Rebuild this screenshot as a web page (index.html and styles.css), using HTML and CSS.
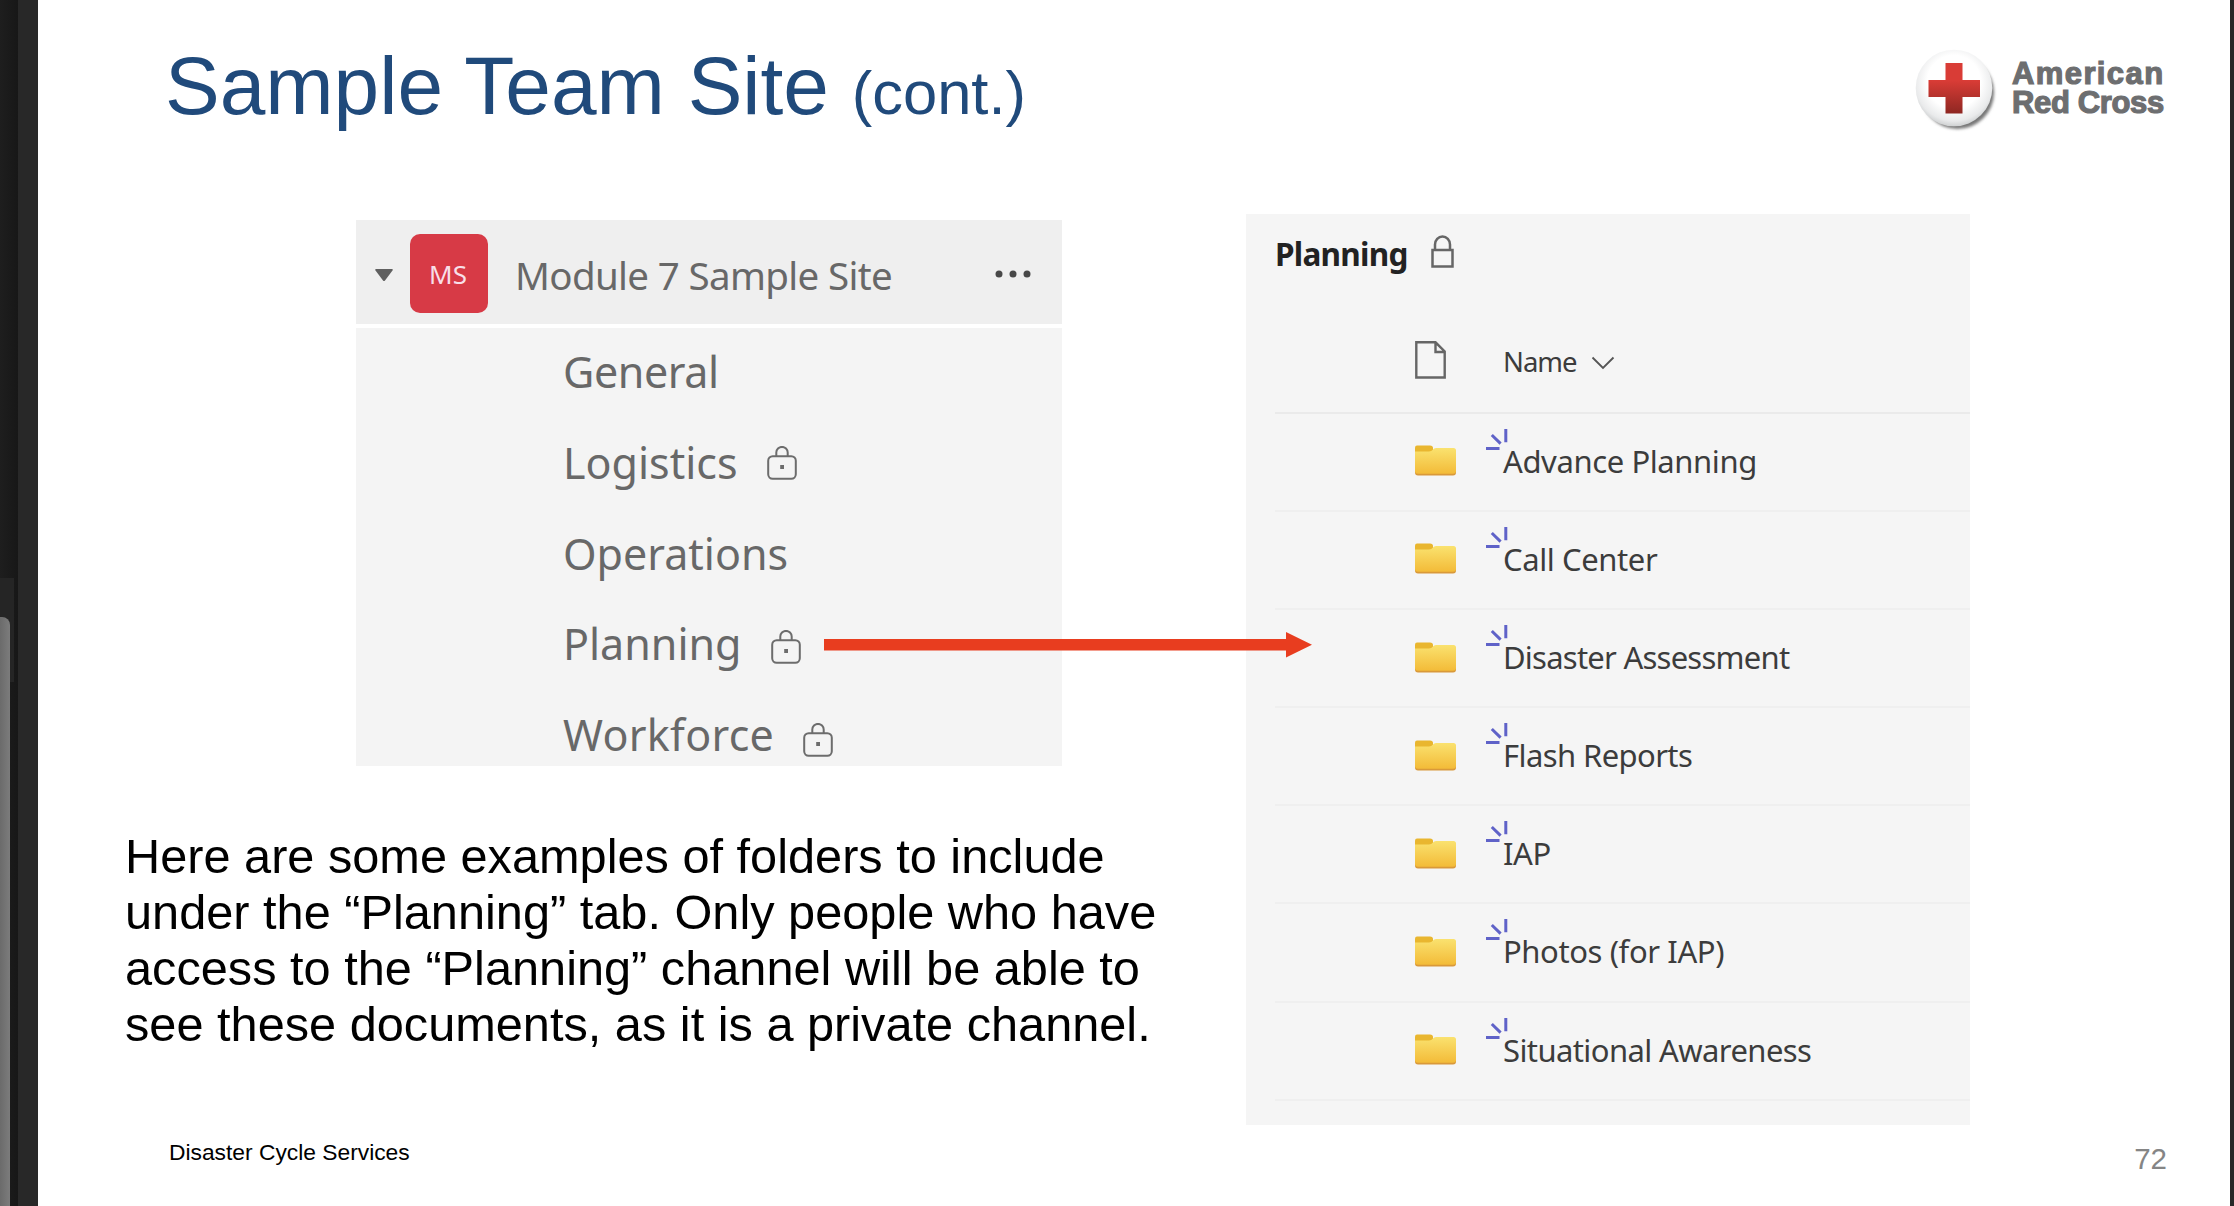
FILE: index.html
```html
<!DOCTYPE html>
<html lang="en">
<head>
<meta charset="utf-8">
<title>Sample Team Site</title>
<link rel="stylesheet" href="styles.css">
</head>
<body>
<svg class="defs" width="0" height="0" aria-hidden="true">
  <defs>
    <linearGradient id="folderFill" x1="0" y1="0" x2="0" y2="1"><stop offset="0" stop-color="#fae26f"/><stop offset="1" stop-color="#f3bb38"/></linearGradient>
    <linearGradient id="crossFill" x1="0" y1="0" x2="0" y2="1"><stop offset="0.35" stop-color="#d93c36"/><stop offset="1" stop-color="#8e2722"/></linearGradient>
    <radialGradient id="buttonFill" cx="0.5" cy="0.42" r="0.58"><stop offset="0.6" stop-color="#ffffff"/><stop offset="0.88" stop-color="#e9eaeb"/><stop offset="1" stop-color="#cfd1d2"/></radialGradient>
    <filter id="soft" x="-20%" y="-20%" width="140%" height="140%"><feGaussianBlur stdDeviation="1.8"/></filter>
  </defs>
  <symbol id="channel-lock" viewBox="0 0 30 34">
    <rect x="1.2" y="10.2" width="27.6" height="22.6" rx="4.5"/>
    <path d="M9.3 10V6.6a5.7 5.7 0 0 1 11.4 0V10"/>
    <rect class="fill" x="13.2" y="19" width="3.8" height="4"/>
  </symbol>
  <symbol id="folder" viewBox="0 0 41 31">
    <path fill="#e9b62f" d="M0 2.5Q0 0.5 2 0.5H15Q18 0.5 18 3V9H0Z"/>
    <path fill="#d9993a" d="M0 10H41V27.5Q41 30.5 38 30.5H3Q0 30.5 0 27.5Z"/>
    <path fill="url(#folderFill)" d="M0 6.6H14Q16.500 6.300 18 4.500Q19 3 21 3H38.500Q41 3 41 5.500V26Q41 28.800 38 28.800H3Q0 28.800 0 26Z"/>
  </symbol>
  <symbol id="spark" viewBox="0 0 24 24">
    <path d="M1 20.500H14.500M6.800 7L15.600 15.600M20.800 1V14.200"/>
  </symbol>
</svg>

<div class="viewer">
  <aside class="gutter">
    <div class="track"><div class="thumb"></div></div>
  </aside>

  <main class="slide">
    <header class="slide-head">
      <h1>Sample Team Site <small>(cont.)</small></h1>
      <div class="brand">
        <svg class="brand-mark" width="84" height="88" viewBox="0 0 84 88">
          <circle cx="43.500" cy="44.500" r="36.500" fill="#777" filter="url(#soft)"/>
          <circle cx="40" cy="40" r="38.300" fill="url(#buttonFill)"/>
          <path fill="url(#crossFill)" d="M31.500 15H48.500V32H66V49H48.500V65.500H31.500V49H14.500V32H31.500Z"/>
        </svg>
        <div class="brand-name"><span class="brand-top">American</span><span>Red Cross</span></div>
      </div>
    </header>

    <div class="content">
      <section class="left">
        <div class="team">
          <div class="team-head">
            <svg class="caret" width="20" height="14" viewBox="0 0 20 14"><path d="M2 1H18Q19.500 1 18.500 2.500L11 12.500Q10 13.500 9 12.500L1.500 2.500Q0.500 1 2 1Z" fill="#606060"/></svg>
            <div class="avatar">MS</div>
            <div class="team-name">Module 7 Sample Site</div>
            <svg class="more" width="36" height="8" viewBox="0 0 36 8" fill="#484848"><circle cx="4" cy="4" r="3.500"/><circle cx="18" cy="4" r="3.500"/><circle cx="32" cy="4" r="3.500"/></svg>
          </div>
          <ul class="channels">
            <li class="snug">General</li>
            <li>Logistics<svg class="lock"><use href="#channel-lock"/></svg></li>
            <li>Operations</li>
            <li>Planning<svg class="lock low"><use href="#channel-lock"/></svg></li>
            <li class="loose">Workforce<svg class="lock lower"><use href="#channel-lock"/></svg></li>
          </ul>
          <svg class="arrow" width="488" height="26" viewBox="0 0 488 26"><path fill="#e83d1f" d="M0 7H462V0L488 12.800L462 25.600V18.600H0Z"/></svg>
        </div>
        <p class="note">Here are some examples of folders to include<br>under the “Planning” tab. Only people who have<br>access to the “Planning” channel will be able to<br>see these documents, as it is a private channel.</p>
      </section>

      <section class="files">
        <div class="files-head">
          <h2>Planning</h2>
          <svg class="files-lock" width="23" height="33" viewBox="0 0 23 33"><path d="M1.500 15H21.500V31.500H1.500ZM4 15V9.500a7.500 8 0 0 1 15 0V15"/></svg>
        </div>
        <div class="row cols">
          <svg class="doc" width="31" height="38" viewBox="0 0 31 38"><path d="M1.300 1.300H20.500L29.700 10.500V36.500H1.300ZM20.500 1.300V11H29.700"/></svg>
          <div class="name">Name<svg class="chevron" width="24" height="14" viewBox="0 0 24 14"><path d="M1.500 1.500L12 12L22.500 1.500"/></svg></div>
        </div>
        <div class="row"><svg class="folder"><use href="#folder"/></svg><div class="name"><svg class="spark"><use href="#spark"/></svg>Advance Planning</div></div>
        <div class="row"><svg class="folder"><use href="#folder"/></svg><div class="name"><svg class="spark"><use href="#spark"/></svg>Call Center</div></div>
        <div class="row"><svg class="folder"><use href="#folder"/></svg><div class="name tighter"><svg class="spark"><use href="#spark"/></svg>Disaster Assessment</div></div>
        <div class="row"><svg class="folder"><use href="#folder"/></svg><div class="name tight"><svg class="spark"><use href="#spark"/></svg>Flash Reports</div></div>
        <div class="row"><svg class="folder"><use href="#folder"/></svg><div class="name"><svg class="spark"><use href="#spark"/></svg>IAP</div></div>
        <div class="row"><svg class="folder"><use href="#folder"/></svg><div class="name"><svg class="spark"><use href="#spark"/></svg>Photos (for IAP)</div></div>
        <div class="row"><svg class="folder"><use href="#folder"/></svg><div class="name tight"><svg class="spark"><use href="#spark"/></svg>Situational Awareness</div></div>
      </section>
    </div>

    <footer class="slide-foot">
      <span>Disaster Cycle Services</span>
      <span class="page">72</span>
    </footer>
  </main>
</div>
</body>
</html>
```
FILE: styles.css
```css
* { box-sizing: border-box; }
body { margin: 0; background: #282828; font-family: "Liberation Sans", Arial, sans-serif; color: #000; }
.defs { display: block; height: 0; }
.viewer { display: flex; width: 2234px; height: 1206px; overflow: hidden; background: #282828; }

.gutter { width: 38px; padding-top: 578px; background: linear-gradient(90deg, #1e1e1e 0, #171717 18px, #282828 18px); }
.track { width: 14px; height: 104px; padding-top: 39px; background: #252525; }
.thumb { width: 10px; height: 600px; border-radius: 0 8px 0 0; background: linear-gradient(90deg, #6b6b6b, #7c7c7c); }

.slide { display: flex; flex-direction: column; width: 2192px; background: #fff; }
.slide-head { display: flex; justify-content: space-between; height: 214px; padding: 36px 63px 0 127px; }
h1 { margin: 0; font-size: 82px; font-weight: 400; line-height: 100px; color: #204a7b; white-space: nowrap; }
h1 small { font-size: 61.500px; line-height: 1; }
.brand { display: flex; gap: 14px; padding-top: 12px; }
.brand-name { display: flex; flex-direction: column; width: 155px; padding-top: 11px; font-size: 31px; font-weight: 700; line-height: 29px; letter-spacing: -0.350px; color: #6d6e70; white-space: nowrap; -webkit-text-stroke: 1.200px #6d6e70; }
.brand-top { letter-spacing: 1.400px; }

.content { display: flex; height: 911px; }
.left { width: 1208px; padding: 6px 0 0 87px; }
.team { position: relative; width: 706px; height: 546px; margin-left: 231px; color: #686868; font-family: "Noto Sans", sans-serif; }
.team-head { display: flex; align-items: center; height: 104px; padding: 3px 31px 0 18px; background: #efefef; }
.caret { margin-top: 2px; }
.avatar { display: flex; align-items: center; justify-content: center; width: 78px; height: 79px; margin-left: 16px; padding-right: 2px; border-radius: 10px; background: #d73a46; color: #f8dfe8; font-size: 26px; }
.team-name { flex: 1; padding: 3px 0 0 27px; font-size: 38.500px; line-height: 60px; letter-spacing: -0.650px; white-space: nowrap; }
.channels { height: 438px; margin: 4px 0 0; padding: 0 0 0 207px; overflow: hidden; background: #f4f4f4; list-style: none; font-size: 43px; }
.channels li { display: flex; align-items: center; gap: 29px; height: 90.750px; line-height: 90.750px; }
.channels .snug { margin-top: -1px; letter-spacing: -0.400px; }
.channels .loose { letter-spacing: 0.300px; }
.lock { width: 30px; height: 34px; fill: none; stroke: #6c6c6c; stroke-width: 2; }
#channel-lock .fill { fill: #6c6c6c; stroke: none; }
.lock.low { margin-top: 4px; }
.lock.lower { margin-top: 10px; }
.arrow { position: absolute; left: 468px; top: 412px; }
.note { margin: 62px 0 0; font-size: 48.700px; line-height: 56px; white-space: nowrap; }

.files { width: 724px; padding-left: 29px; background: #f5f5f5; color: #3c3c3c; font-family: "Noto Sans", sans-serif; }
.files-head { display: flex; align-items: center; gap: 23px; height: 79px; margin-bottom: 18px; }
h2 { margin: 0; font-size: 31.500px; line-height: 60px; font-weight: 700; letter-spacing: -0.750px; color: #222; }
.files-lock { margin-bottom: 5px; fill: none; stroke: #666; stroke-width: 2.500; }
.row { display: grid; grid-template-columns: 140px 88px 1fr; align-items: center; height: 98.150px; padding-bottom: 2px; border-bottom: 2px solid #efefef; }
.row > :first-child { grid-column: 2; }
.row.cols { height: 102.700px; border-color: #eaeaea; }
.doc { fill: none; stroke: #666; stroke-width: 2.400; }
.name { position: relative; font-size: 31px; line-height: 60px; letter-spacing: -0.400px; white-space: nowrap; }
.name.tight { letter-spacing: -0.600px; }
.name.tighter { letter-spacing: -0.760px; }
.cols .name { padding-top: 3px; font-size: 27.500px; letter-spacing: -1px; }
.chevron { margin: 0 0 2px 14px; fill: none; stroke: #555; stroke-width: 1.800; }
.folder { width: 41px; height: 31px; }
.spark { position: absolute; left: -18px; top: -3px; width: 24px; height: 24px; fill: none; stroke: #5f62c8; stroke-width: 3; }

.slide-foot { display: flex; justify-content: space-between; height: 81px; padding: 20px 63px 0 131px; font-size: 22.800px; line-height: 15px; }
.page { font-size: 29.500px; line-height: 27px; color: #858585; }
```
